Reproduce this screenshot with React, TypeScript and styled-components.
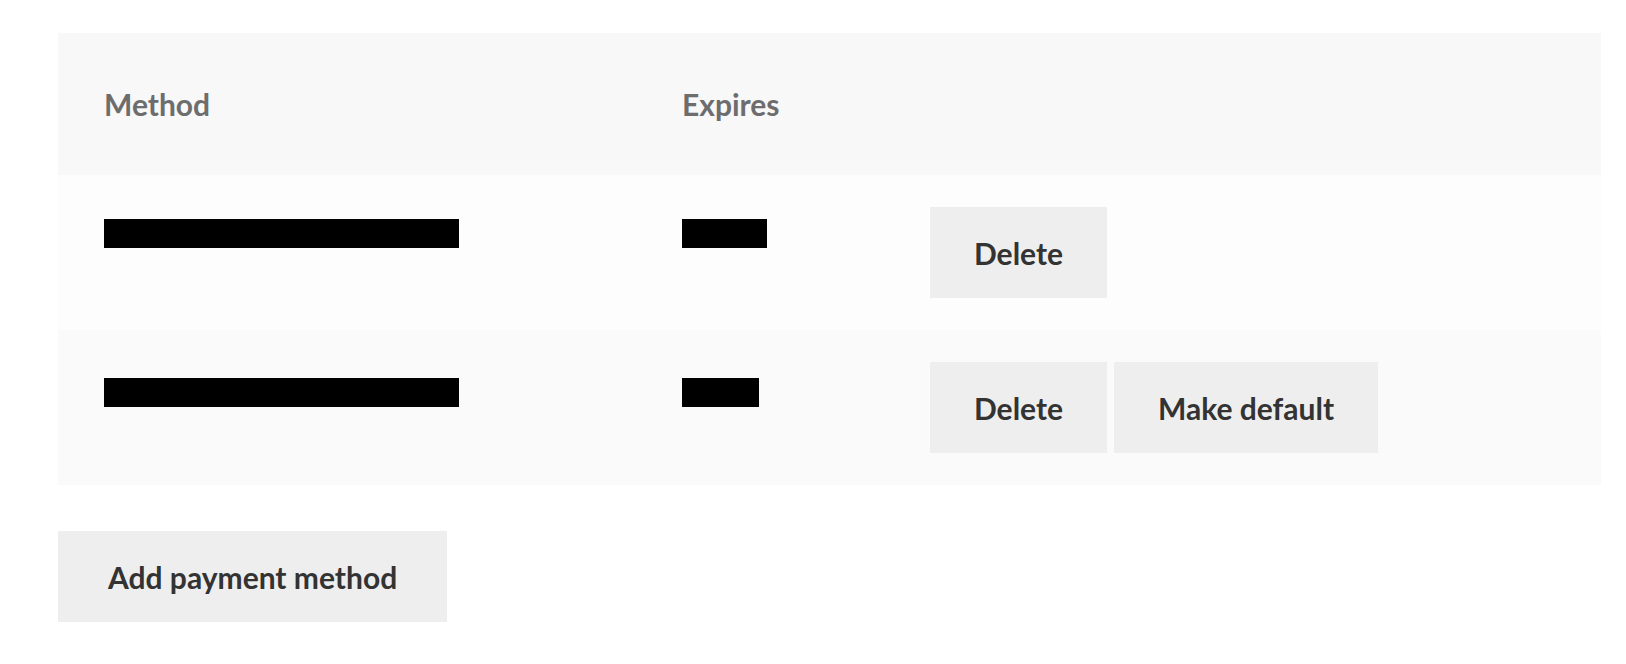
import React from "react";
import styled, { createGlobalStyle } from "styled-components";

const GlobalStyle = createGlobalStyle`
  body {
    margin: 0;
    background: #ffffff;
    font-family: "Lato", "Liberation Sans", sans-serif;
  }
`;

type Method = {
  id: number;
  nameWidth: number;
  expWidth: number;
  top: number;
  isDefault: boolean;
};

const methods: Method[] = [
  { id: 1, nameWidth: 355, expWidth: 85, top: 12, isDefault: true },
  { id: 2, nameWidth: 355, expWidth: 77, top: 16, isDefault: false },
];

const App = () => {
  return (
    <>
      <GlobalStyle />
      <Page>
        <Table>
          <colgroup>
            <col style={{ width: 578 }} />
            <col style={{ width: 248 }} />
            <col />
          </colgroup>
          <thead>
            <tr>
              <Th>Method</Th>
              <Th>Expires</Th>
              <Th />
            </tr>
          </thead>
          <tbody>
            {methods.map((m, i) => (
              <Row key={m.id} $even={i % 2 === 1}>
                <Td>
                  <Redacted $w={m.nameWidth} $top={m.top} />
                </Td>
                <Td>
                  <Redacted $w={m.expWidth} $top={m.top} />
                </Td>
                <Td>
                  <Actions>
                    <Button $pad={44}>Delete</Button>
                    {!m.isDefault && <Button $pad={44}>Make default</Button>}
                  </Actions>
                </Td>
              </Row>
            ))}
          </tbody>
        </Table>
        <Button $pad={50}>Add payment method</Button>
      </Page>
    </>
  );
};

export default App;

const Page = styled.div`
  padding: 33px 25px 0 58px;
  display: flex;
  flex-direction: column;
  align-items: flex-start;
  gap: 46px;
`;

const Table = styled.table`
  width: 100%;
  border-collapse: collapse;
  border-spacing: 0;
  table-layout: fixed;
`;

const Th = styled.th`
  background: #f8f8f8;
  color: #6d6d6d;
  font-weight: 700;
  font-size: 30px;
  line-height: 50px;
  text-align: left;
  padding: 46px 46px;
`;

const Row = styled.tr<{ $even: boolean }>`
  background: ${(p) => (p.$even ? "#fafafa" : "#fdfdfd")};
`;

const Td = styled.td`
  padding: 32px 46px;
  vertical-align: top;
  height: 91px;
`;

const Redacted = styled.span<{ $w: number; $top: number }>`
  display: block;
  width: ${(p) => p.$w}px;
  height: 29px;
  margin-top: ${(p) => p.$top}px;
  background: #000000;
`;

const Actions = styled.div`
  display: flex;
  gap: 7px;
`;

const Button = styled.button<{ $pad: number }>`
  background: #eeeeee;
  color: #333333;
  border: none;
  border-radius: 0;
  height: 91px;
  padding: 0 ${(p) => p.$pad}px;
  font-family: "Lato", "Liberation Sans", sans-serif;
  font-weight: 700;
  font-size: 30px;
  cursor: pointer;
`;
